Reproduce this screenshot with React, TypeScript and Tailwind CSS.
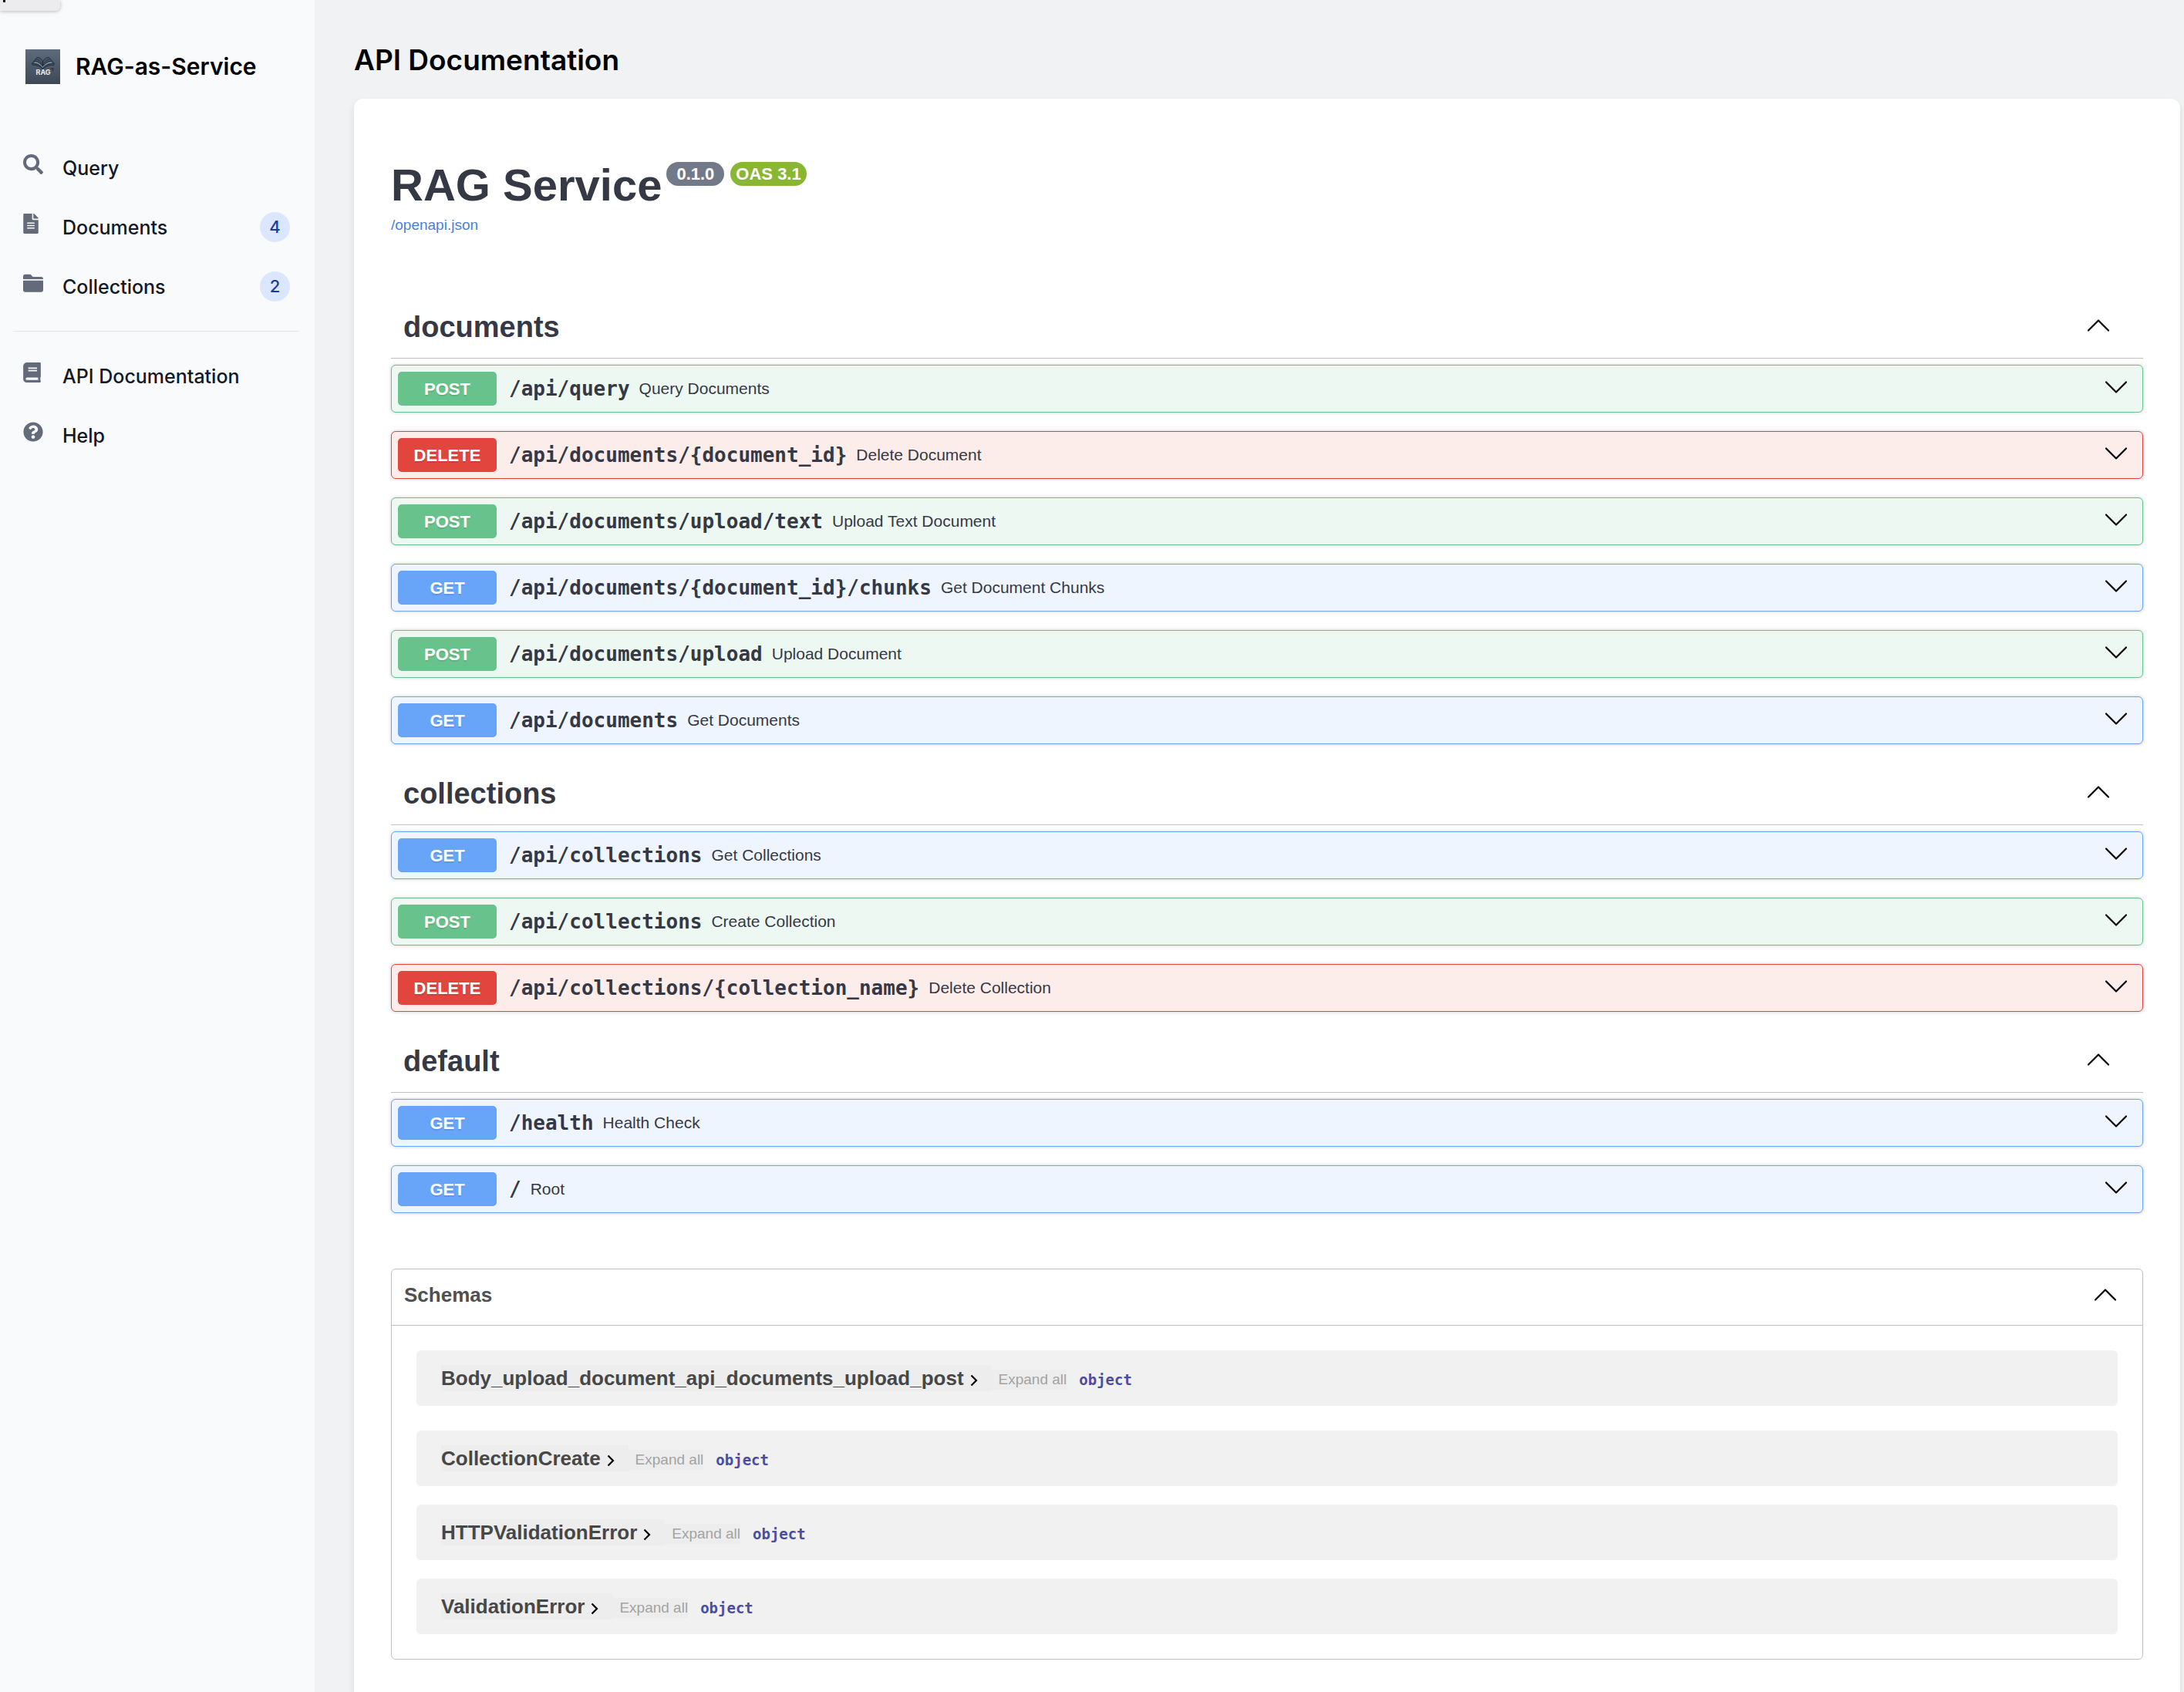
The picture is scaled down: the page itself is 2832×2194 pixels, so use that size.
import React from "react";
import { FaBook, FaFileAlt, FaQuestionCircle, FaSearch } from "react-icons/fa";

type Method = "GET" | "POST" | "DELETE";

type Operation = { method: Method; path: string; summary: string };

const tags: { name: string; operations: Operation[] }[] = [
  {
    name: "documents",
    operations: [
      { method: "POST", path: "/api/query", summary: "Query Documents" },
      { method: "DELETE", path: "/api/documents/{document_id}", summary: "Delete Document" },
      { method: "POST", path: "/api/documents/upload/text", summary: "Upload Text Document" },
      { method: "GET", path: "/api/documents/{document_id}/chunks", summary: "Get Document Chunks" },
      { method: "POST", path: "/api/documents/upload", summary: "Upload Document" },
      { method: "GET", path: "/api/documents", summary: "Get Documents" },
    ],
  },
  {
    name: "collections",
    operations: [
      { method: "GET", path: "/api/collections", summary: "Get Collections" },
      { method: "POST", path: "/api/collections", summary: "Create Collection" },
      { method: "DELETE", path: "/api/collections/{collection_name}", summary: "Delete Collection" },
    ],
  },
  {
    name: "default",
    operations: [
      { method: "GET", path: "/health", summary: "Health Check" },
      { method: "GET", path: "/", summary: "Root" },
    ],
  },
];

const schemas = [
  "Body_upload_document_api_documents_upload_post",
  "CollectionCreate",
  "HTTPValidationError",
  "ValidationError",
];

const rowTone: Record<Method, string> = {
  GET: "border-[#68a4f8] bg-[#eff5fe]",
  POST: "border-[#67c38b] bg-[#eef8f3]",
  DELETE: "border-[#e2453d] bg-[#fcecea]",
};

const badgeTone: Record<Method, string> = {
  GET: "bg-[#68a4f8]",
  POST: "bg-[#67c38b]",
  DELETE: "bg-[#e2453d]",
};

function Chevron({ up = false }: { up?: boolean }) {
  return (
    <svg viewBox="0 0 28 16" className="h-4 w-7 shrink-0" fill="none" stroke="#000" strokeWidth="2.2" strokeLinecap="round" strokeLinejoin="round" aria-hidden="true">
      <path d={up ? "M1 14.5 14 1.5 27 14.5" : "M1 1.5 14 14.5 27 1.5"} />
    </svg>
  );
}

function FolderIcon() {
  return (
    <svg viewBox="0 0 78 78" className="size-[26px]" fill="currentColor" aria-hidden="true">
      <path d="M8 5H27C32 5 34 15 41 15H70C75 15 78 18 78 22V24H0V13C0 8 3 5 8 5Z" />
      <path d="M0 29H78V66C78 71 75 74 70 74H8C3 74 0 71 0 66Z" />
    </svg>
  );
}

function Logo() {
  return (
    <svg viewBox="0 0 45 45" className="size-[45px] shrink-0" aria-hidden="true">
      <defs>
        <linearGradient id="logo-bg" x1="0" y1="0" x2="0" y2="1">
          <stop offset="0" stopColor="#5d6b7b" />
          <stop offset="1" stopColor="#3d4857" />
        </linearGradient>
      </defs>
      <rect width="45" height="45" fill="url(#logo-bg)" />
      <g strokeLinejoin="round" strokeLinecap="round">
        <path d="M22.5 15.5 C20 11.5 17 10 15 10.5 L8 19 C13 18 19 20 22.5 24.5 C26 20 32 18 38 19 L30.5 10.5 C28 10 25 11.5 22.5 15.5Z" fill="#465566" stroke="#222e3b" strokeWidth="1" />
        <path d="M22.5 16 V24" stroke="#1c2733" strokeWidth="1.2" />
        <path d="M13.5 13 C17 13 20 16 21.5 20 M31.5 13 C28 13 25 16 23.5 20 M11.5 15.5 C16 15 19.5 18 21.5 22 M33.5 15.5 C29 15 25.5 18 23.5 22" fill="none" stroke="#222e3b" strokeWidth=".8" />
        <path d="M12 17 C16 17 20 20 22.3 23.5 C25 20 29 17 33.5 17" fill="none" stroke="#c6cfca" strokeWidth=".8" />
        <path d="M9 20 C14 20 19 22 22.5 25.5 C26 22 31 20 36.5 20.5 M33 25.5 L36 24.5 L35.5 28" fill="none" stroke="#222e3b" strokeWidth="1" />
      </g>
      <text x="23" y="33" textAnchor="middle" fontFamily="Inter, sans-serif" fontWeight="700" fontSize="9" fill="#e9edef">RAG</text>
    </svg>
  );
}

function NavItem({ icon, label, count }: { icon: React.ReactNode; label: string; count?: number }) {
  return (
    <a href="#" className="flex h-[77px] items-center pr-3 pl-[13px] text-[25px] font-medium text-[#111827]">
      <span className="flex w-[51px] shrink-0 pb-2.5 text-[#636a79]">{icon}</span>
      <span className="flex-1 pt-0.5">{label}</span>
      {count !== undefined && (
        <span className="flex size-[39px] items-center justify-center rounded-full bg-[#dbe7fe] text-[22px] text-[#1f38a5]">
          {count}
        </span>
      )}
    </a>
  );
}

function OperationRow({ method, path, summary }: Operation) {
  return (
    <button type="button" className={`flex h-[62px] w-full items-center rounded-md border pr-5 pl-2 text-left shadow-[0_0_5px_rgba(0,0,0,0.19)] ${rowTone[method]}`}>
      <span className={`flex h-11 w-32 shrink-0 items-center justify-center rounded-[5px] text-[22px] font-bold text-white [text-shadow:0_2px_0_rgba(0,0,0,0.1)] ${badgeTone[method]}`}>
        {method}
      </span>
      <span className="pl-4 font-['DejaVu_Sans_Mono',monospace] text-[26px] leading-8 font-bold whitespace-nowrap">{path}</span>
      <span className="flex-1 pl-3 text-[21px] leading-8">{summary}</span>
      <span className="pb-1"><Chevron /></span>
    </button>
  );
}

function SchemaRow({ name }: { name: string }) {
  return (
    <div className="flex h-[72px] items-center rounded-md bg-[#f1f1f1] px-8">
      <button type="button" className="flex h-[34px] items-center bg-[#ededed] pr-[18px] text-[26px] font-bold text-[#474747]">
        {name}
        <svg viewBox="0 0 10 16" className="mt-1.5 ml-2 h-4 w-2.5" fill="none" stroke="#000" strokeWidth="2.2" aria-hidden="true">
          <path d="M1.5 1.5 8 8 1.5 14.5" />
        </svg>
      </button>
      <button type="button" className="mt-1 flex h-[26px] items-center bg-[#ededed] pl-[9px] text-[19px] text-[#a3a3a3]">Expand all</button>
      <strong className="mt-1 pl-4 font-['DejaVu_Sans_Mono',monospace] text-[19px] leading-6 text-[#4c4ca0]">object</strong>
    </div>
  );
}

export default function App() {
  return (
    <div className="flex min-h-screen bg-[#f1f2f4] font-[Inter,sans-serif]">
      <aside className="relative w-[408px] shrink-0 bg-[#f8fafc]">
        {/* Lower edge of the browser's link bubble */}
        <div className="absolute top-0 left-0 h-3.5 w-[78px] rounded-br-md bg-[#ececee] pl-1 shadow-[0_1px_5px_rgba(0,0,0,0.25)]">
          <div className="h-[3px] w-[3px] bg-black" />
        </div>
        <div className="flex items-center gap-5 pt-16 pl-[33px]">
          <Logo />
          <span className="text-[30px] leading-[45px] font-semibold whitespace-nowrap text-black">RAG-as-Service</span>
        </div>
        <nav className="mt-[70px] mr-5 ml-[17px]">
          <NavItem icon={<FaSearch size={26} />} label="Query" />
          <NavItem icon={<FaFileAlt className="h-[26px] w-5" />} label="Documents" count={4} />
          <NavItem icon={<FolderIcon />} label="Collections" count={2} />
          <hr className="my-[19px] border-[#e2e5ea]" />
          <NavItem icon={<FaBook className="h-[26px] w-[23px]" />} label="API Documentation" />
          <NavItem icon={<FaQuestionCircle size={26} />} label="Help" />
        </nav>
      </aside>

      <main className="flex min-w-0 flex-1 flex-col pr-[5px] pl-[51px]">
        <h1 className="pt-[54px] pb-[26px] text-[37px] leading-12 font-semibold text-black">API Documentation</h1>
        <section className="grow rounded-t-xl bg-white px-12 pb-10 font-['Liberation_Sans',Arial,sans-serif] text-[#353945] shadow-[0_5px_10px_rgba(0,0,0,0.1)]">
          <header className="pt-20">
            <div className="flex items-start gap-1.5">
              <h2 className="text-[58px] leading-16 font-bold">RAG Service</h2>
              <div className="mt-0.5 flex gap-2 text-[22px] leading-[31px] font-bold text-white">
                <span className="rounded-full bg-[#727988] px-[13px]">0.1.0</span>
                <span className="rounded-full bg-[#89b633] px-[7px]">OAS 3.1</span>
              </div>
            </div>
            <a href="#" className="mt-2 block w-fit text-[19px] leading-6 text-[#4a80da]">/openapi.json</a>
          </header>

          <div className="mt-[79px]">
            {tags.map((tag) => (
              <section key={tag.name} className="pb-[23px]">
                <button type="button" className="mb-2 flex h-[82px] w-full items-center justify-between border-b border-[#bfc0c4] pr-11 pl-4">
                  <span className="text-[38px] leading-12 font-bold">{tag.name}</span>
                  <span className="pb-1"><Chevron up /></span>
                </button>
                <div className="flex flex-col gap-6">
                  {tag.operations.map((op) => (
                    <OperationRow key={op.method + op.path} {...op} />
                  ))}
                </div>
              </section>
            ))}
          </div>

          <section className="mt-[49px] rounded-md border border-[#c2c2c4]">
            <button type="button" className="flex h-[73px] w-full items-center justify-between border-b border-[#c2c2c4] pr-[34px] pb-1.5 pl-4 text-[26px] font-bold text-[#505050]">
              Schemas
              <Chevron up />
            </button>
            <div className="flex flex-col gap-6 px-8 py-8">
              {schemas.map((name) => (
                <div key={name} className="first:mb-2">
                  <SchemaRow name={name} />
                </div>
              ))}
            </div>
          </section>
        </section>
      </main>
    </div>
  );
}
